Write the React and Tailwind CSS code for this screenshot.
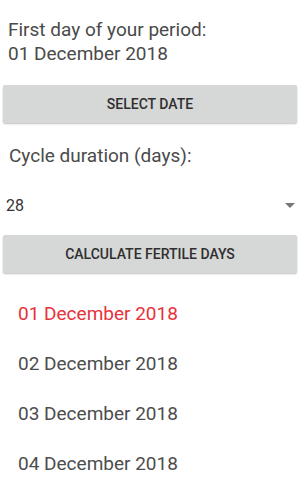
export default function App() {
  const dates = [
    "01 December 2018",
    "02 December 2018",
    "03 December 2018",
    "04 December 2018",
  ];

  return (
    <div
      className="w-[300px] h-[500px] bg-white overflow-hidden text-[#4a4a4a]"
      style={{ fontFamily: "Roboto, 'Liberation Sans', sans-serif" }}
    >
      {/* period start */}
      <div className="pt-[18px] pl-[8px] text-[19px] leading-[24px]">
        <div>First day of your period:</div>
        <div>01 December 2018</div>
      </div>

      <div className="px-[3px] mt-[19px]">
        <button className="w-full h-[38px] bg-[#d6d7d7] rounded-[2px] shadow-[0_1px_2px_rgba(0,0,0,0.25)] text-[14px] font-medium text-[#2f2f2f] uppercase">
          Select date
        </button>
      </div>

      {/* cycle */}
      <div className="mt-[21px] pl-[9px] text-[19px] leading-[24px]">
        Cycle duration (days):
      </div>

      <div className="mt-[26px] h-[24px] flex items-center justify-between pl-[6px] pr-[5px]">
        <span className="text-[16px] text-[#333]">28</span>
        <svg width="10" height="6" viewBox="0 0 10 6">
          <path d="M0 0 L10 0 L5 5 Z" fill="#777" />
        </svg>
      </div>

      <div className="px-[3px] mt-[17px]">
        <button className="w-full h-[38px] bg-[#d6d7d7] rounded-[2px] shadow-[0_1px_2px_rgba(0,0,0,0.25)] text-[14px] font-medium text-[#2f2f2f] uppercase">
          Calculate fertile days
        </button>
      </div>

      {/* fertile days list */}
      <div className="mt-[16px]">
        {dates.map((d, i) => (
          <div
            key={d}
            className={`h-[50px] leading-[50px] pl-[18px] text-[19px] ${
              i === 0 ? "text-[#e8313b]" : "text-[#4d4d4d]"
            }`}
          >
            {d}
          </div>
        ))}
      </div>
    </div>
  );
}
